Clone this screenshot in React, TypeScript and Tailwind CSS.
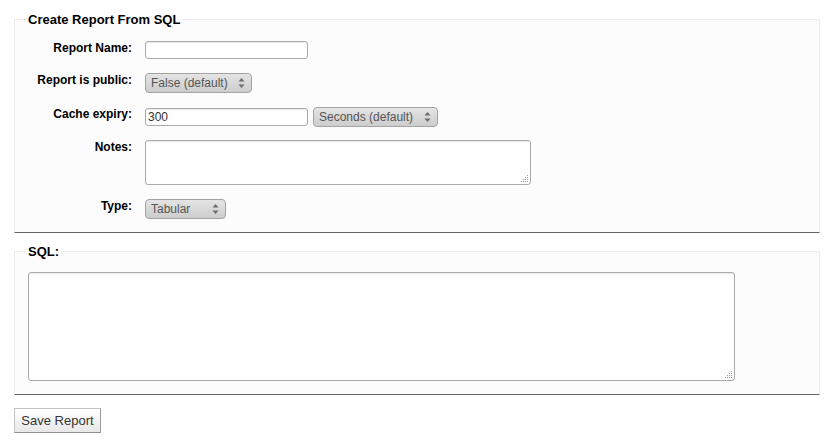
import React from "react";

const font = { fontFamily: '"Liberation Sans", Arial, sans-serif' };

const Arrows = () => (
  <svg width="7" height="12" viewBox="0 0 7 12" className="pointer-events-none absolute right-[7px] top-1/2 -translate-y-1/2">
    <path d="M3.5 1 L6.5 4.5 L0.5 4.5 Z" fill="#6b6b6b" />
    <path d="M3.5 11 L6.5 7.5 L0.5 7.5 Z" fill="#6b6b6b" />
  </svg>
);

const Grip = () => (
  <svg width="9" height="9" viewBox="0 0 9 9" className="pointer-events-none absolute right-[2px] bottom-[2px]">
    <rect x="7" y="1" width="1" height="1" fill="#999" />
    <rect x="5" y="3" width="1" height="1" fill="#999" />
    <rect x="7" y="3" width="1" height="1" fill="#999" />
    <rect x="3" y="5" width="1" height="1" fill="#999" />
    <rect x="5" y="5" width="1" height="1" fill="#999" />
    <rect x="7" y="5" width="1" height="1" fill="#999" />
    <rect x="1" y="7" width="1" height="1" fill="#999" />
    <rect x="3" y="7" width="1" height="1" fill="#999" />
    <rect x="5" y="7" width="1" height="1" fill="#999" />
    <rect x="7" y="7" width="1" height="1" fill="#999" />
  </svg>
);

const Select = ({ value, width }: { value: string; width: string }) => (
  <div className={`relative ${width} h-[20px] shrink-0`}>
    <select
      defaultValue={value}
      className="block h-full w-full appearance-none rounded-[4px] border border-[#a3a3a3] bg-gradient-to-b from-[#e4e4e4] to-[#cdcdcd] pl-[5px] text-[12px] text-[#555] outline-none"
      style={font}
    >
      <option>{value}</option>
    </select>
    <Arrows />
  </div>
);

const Row = ({ label, h, children }: { label: string; h: string; children: React.ReactNode }) => (
  <div className={`flex ${h} items-start gap-[13px]`}>
    <label className="w-[106px] shrink-0 text-right text-[12px] leading-[14px] font-bold text-black">{label}</label>
    {children}
  </div>
);

const inputCls =
  "block h-[18px] rounded-[3px] border border-[#aaa] bg-white px-[2px] text-[12px] text-[#333] shadow-[inset_0_1px_1px_rgba(0,0,0,0.08)] outline-none";

export default function App() {
  return (
    <div className="min-h-screen bg-white pl-[14px] pr-[8px] pt-[12px]" style={font}>
      <fieldset className="border border-[#ececec] border-b-[#666] bg-[#fcfcfc] pl-[11px] pr-[12px] pb-[13px]">
        <legend className="px-[2px] text-[13px] leading-[15px] font-bold text-black">Create Report From SQL</legend>
        <div className="mt-[14px] flex flex-col gap-[14px]">
          <Row label="Report Name:" h="h-[18px]">
            <input className={`${inputCls} w-[163px]`} style={font} />
          </Row>
          <Row label="Report is public:" h="h-[20px]">
            <Select value="False (default)" width="w-[107px]" />
          </Row>
          <Row label="Cache expiry:" h="h-[19px]">
            <div className="flex items-start gap-[5px]">
              <input className={`${inputCls} mt-[1px] w-[163px]`} style={font} defaultValue="300" />
              <Select value="Seconds (default)" width="w-[125px]" />
            </div>
          </Row>
          <Row label="Notes:" h="h-[45px]">
            <div className="relative">
              <textarea className={`${inputCls} h-[45px] w-[386px] resize-none`} style={font} />
              <Grip />
            </div>
          </Row>
          <Row label="Type:" h="h-[20px]">
            <Select value="Tabular" width="w-[81px]" />
          </Row>
        </div>
      </fieldset>

      <fieldset className="mt-[11px] border border-[#ececec] border-b-[#666] bg-[#fcfcfc] pl-[11px] pr-[12px] pb-[13px]">
        <legend className="px-[2px] text-[13px] leading-[15px] font-bold text-black">SQL:</legend>
        <div className="relative ml-[2px] mt-[13px] w-[707px]">
          <textarea className={`${inputCls} h-[109px] w-full resize-none`} style={font} />
          <Grip />
        </div>
      </fieldset>

      <button
        className="mt-[13px] h-[25px] w-[87px] border border-[#c4c4c4] border-b-[#8f8f8f] border-r-[#9a9a9a] bg-gradient-to-b from-white to-[#e8e8e8] text-[13px] text-[#333]"
        style={font}
      >
        Save Report
      </button>
    </div>
  );
}
